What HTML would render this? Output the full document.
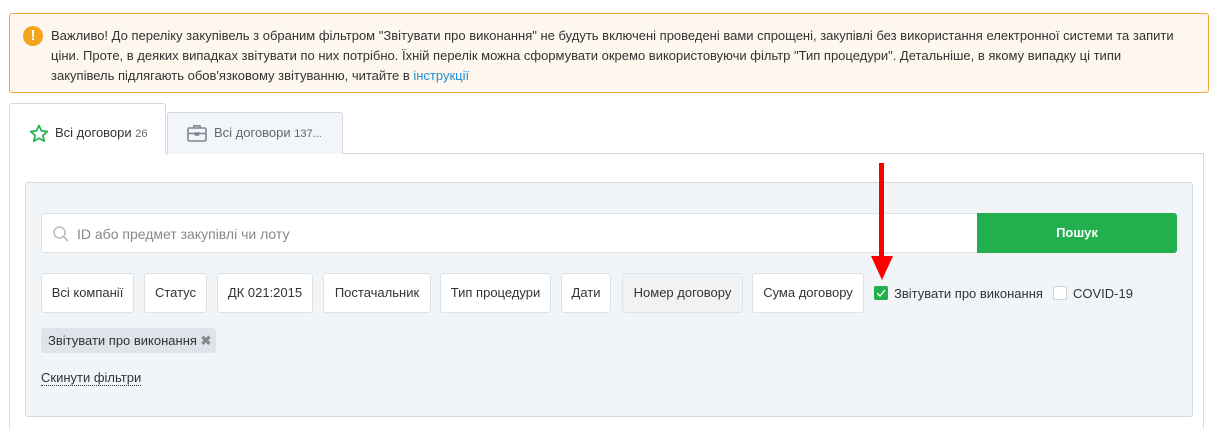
<!DOCTYPE html>
<html><head><meta charset="utf-8"><style>
*{box-sizing:border-box;margin:0;padding:0}
html,body{width:1213px;height:429px;overflow:hidden}
body{background:#fff;font-family:"Liberation Sans",Arial,sans-serif;color:#333;position:relative;font-size:13px}
.abs{position:absolute}
.alert{left:9px;top:13px;width:1200px;height:80px;background:#fef7ee;border:1px solid #f2a838;border-radius:3px}
.alert p{position:absolute;left:41px;top:12px;width:1132px;font-size:13px;line-height:20px;color:#333}
.alert a{color:#1f8fd6;text-decoration:none}
.ic{left:13px;top:12px;width:20px;height:20px;border-radius:50%;background:#f4a41f;color:#fff;font-weight:bold;text-align:center;line-height:20px;font-size:15px}
.tab1{left:9px;top:103px;width:157px;height:52px;background:#fff;border:1px solid #d5dae0;border-bottom:none;border-radius:3px 3px 0 0;z-index:2}
.tab2{left:167px;top:112px;width:176px;height:42px;background:#f2f5f9;border:1px solid #d5dae0;border-bottom:none;border-radius:3px 3px 0 0}
.wrap{left:9px;top:153px;width:1195px;height:276px;border:1px solid #d5dae0;border-bottom:none}
.panel{left:25px;top:182px;width:1168px;height:235px;background:#f2f5f8;border:1px solid #d5dae0;border-radius:3px}
.inp{left:41px;top:213px;width:937px;height:40px;background:#fff;border:1px solid #dde2e7;border-right:none;border-radius:3px 0 0 3px}
.btn{left:977px;top:213px;width:200px;height:40px;background:#22b04f;color:#fff;font-weight:bold;text-align:center;line-height:40px;border-radius:0 3px 3px 0;font-size:13px}
.f{top:273px;height:40px;background:#fff;border:1px solid #dde2e7;border-radius:3px;line-height:38px;text-align:center;font-size:13px;color:#333}
.cb{width:14px;height:14px;border-radius:2px;top:286px}
</style></head><body>
<div class="abs alert"><div class="abs ic">!</div><p>Важливо! До переліку закупівель з обраним фільтром "Звітувати про виконання" не будуть включені проведені вами спрощені, закупівлі без використання електронної системи та запити ціни. Проте, в деяких випадках звітувати по них потрібно. Їхній перелік можна сформувати окремо використовуючи фільтр "Тип процедури". Детальніше, в якому випадку ці типи закупівель підлягають обов'язковому звітуванню, читайте в <a>інструкції</a></p></div>
<div class="abs wrap"></div>
<div class="abs tab1">
<svg class="abs" style="left:19px;top:20px" width="20" height="19" viewBox="0 0 20 19"><path d="M10 1.5l2.5 5.4 5.8.6-4.4 3.9 1.3 5.8L10 14.2l-5.2 3 1.3-5.8L1.7 7.5l5.8-.6z" fill="none" stroke="#22b04f" stroke-width="1.7" stroke-linejoin="round"/></svg>
<span class="abs" style="left:45px;top:21px;font-size:13px">Всі договори <span style="font-size:11px;color:#666">26</span></span></div>
<div class="abs tab2">
<svg class="abs" style="left:19px;top:11px" width="20" height="18" viewBox="0 0 20 18"><rect x="1" y="4" width="18" height="13" rx="1.5" fill="none" stroke="#7d8590" stroke-width="1.6"/><path d="M7 4V1.8h6V4M1 9.5h18M8.5 8v3h3V8" fill="none" stroke="#7d8590" stroke-width="1.6"/></svg>
<span class="abs" style="left:46px;top:12px;font-size:13px;color:#666">Всі договори <span style="font-size:11px">137...</span></span></div>
<div class="abs panel"></div>
<div class="abs inp"><svg class="abs" style="left:10px;top:11px" width="18" height="18" viewBox="0 0 18 18"><circle cx="7.5" cy="7.5" r="5.5" fill="none" stroke="#b5bcc4" stroke-width="1.5"/><path d="M11.5 11.5L16 16" stroke="#b5bcc4" stroke-width="1.7"/></svg><span class="abs" style="left:35px;top:12px;color:#888;font-size:14px">ID або предмет закупівлі чи лоту</span></div>
<div class="abs btn">Пошук</div>
<div class="abs f" style="left:41px;width:93px">Всі компанії</div>
<div class="abs f" style="left:144px;width:63px">Статус</div>
<div class="abs f" style="left:217px;width:96px">ДК 021:2015</div>
<div class="abs f" style="left:323px;width:108px">Постачальник</div>
<div class="abs f" style="left:440px;width:111px">Тип процедури</div>
<div class="abs f" style="left:561px;width:50px">Дати</div>
<div class="abs f" style="left:622px;width:121px;background:#f0f2f4">Номер договору</div>
<div class="abs f" style="left:752px;width:112px">Сума договору</div>
<div class="abs cb" style="left:874px;background:#22b04f"><svg width="14" height="14"><path d="M3 7l3 3 5-6" fill="none" stroke="#fff" stroke-width="1.3"/></svg></div>
<span class="abs" style="left:894px;top:286px">Звітувати про виконання</span>
<div class="abs cb" style="left:1053px;background:#fff;border:1px solid #ccd2d8"></div>
<span class="abs" style="left:1073px;top:286px">COVID-19</span>
<div class="abs" style="left:41px;top:328px;width:175px;height:25px;background:#dfe4ea;border-radius:3px;line-height:25px;padding-left:7px">Звітувати про виконання <span style="color:#888;font-weight:bold">✖</span></div>
<span class="abs" style="left:41px;top:370px;border-bottom:1px dotted #333;line-height:15px">Скинути фільтри</span>
<div class="abs" style="left:879px;top:163px;width:5px;height:95px;background:#f00"></div>
<svg class="abs" style="left:870px;top:255px" width="24" height="26"><path d="M1 1h22L12 25z" fill="#f00"/></svg>
</body></html>
